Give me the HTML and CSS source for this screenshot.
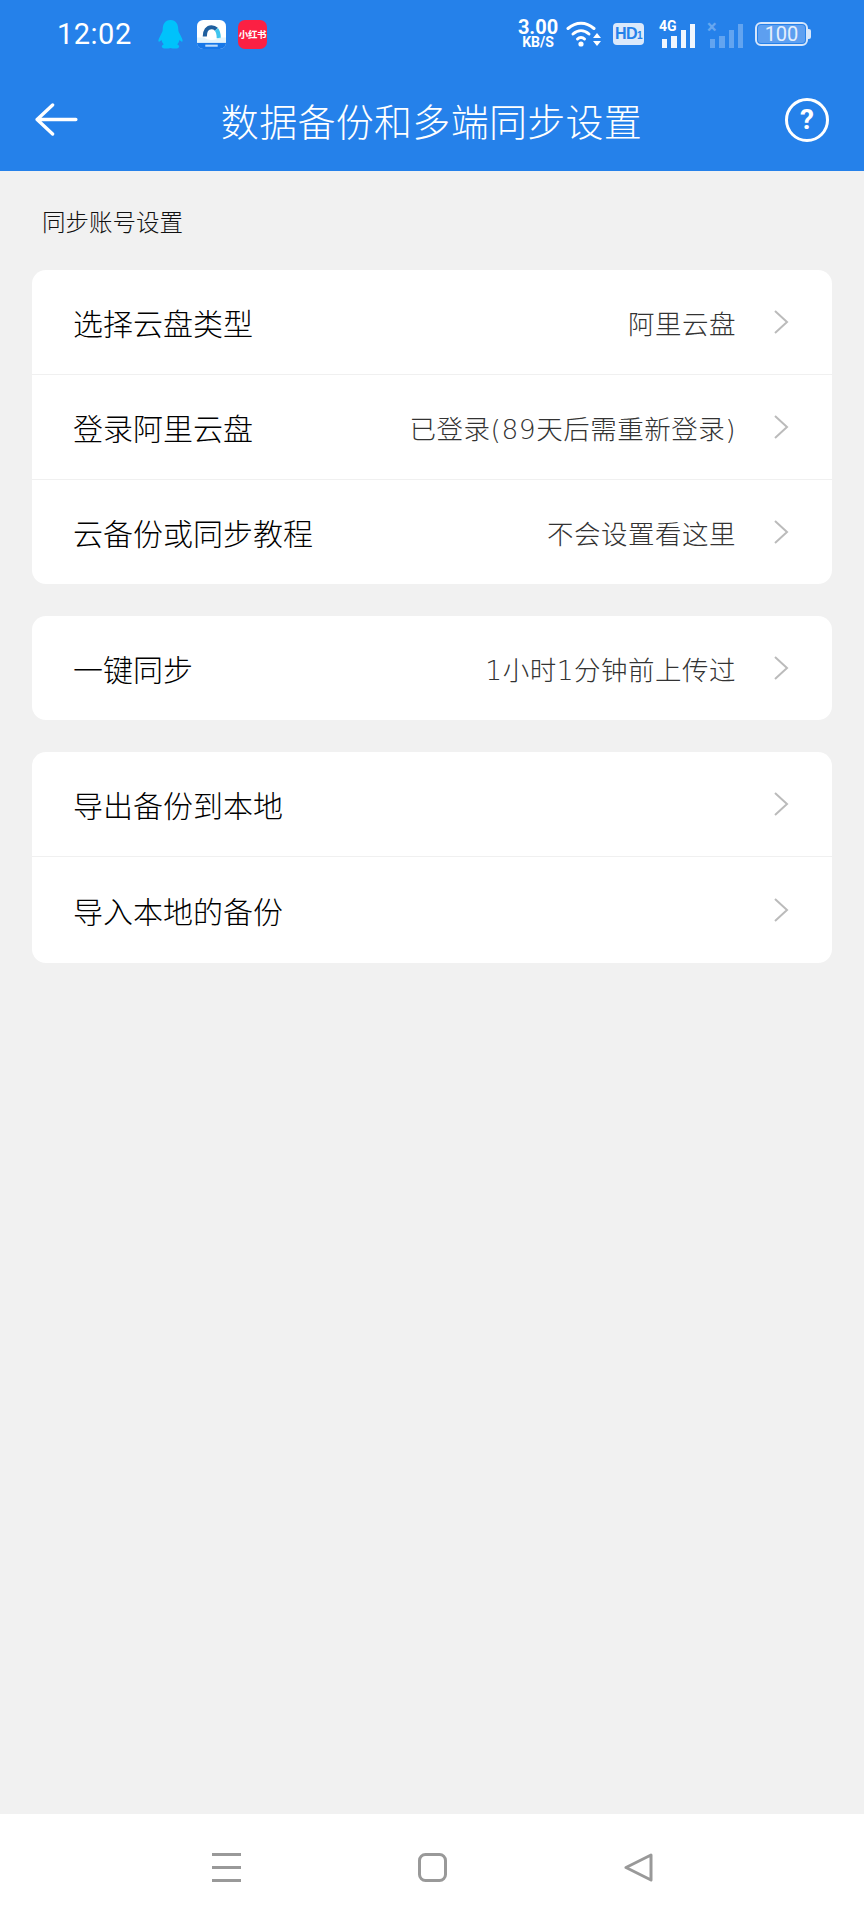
FILE: index.html
```html
<!DOCTYPE html>
<html lang="zh-CN">

<head>
    <meta charset="utf-8" />
    <title>数据备份和多端同步设置</title>
    <link rel="stylesheet" href="styles.css">
</head>

<body>
    <div class="page">
        <div class="top">
            <div class="status">
                <span class="clock">12:02</span>
                <div class="apps">
                    <svg class="app" viewBox="0 0 28 28">
                        <path fill="#00c2fb" d="M14 0C8.500 0 6.500 4.500 6.500 9C6.500 11 5.800 12 4.500 14.500C3 17.500 1.800 20 2.500 20.800C3.200 21.300 4.600 20 5.200 19C5.800 21 6.500 22.500 7.500 23.500C6 24.200 5 25.500 6 26.500C7.500 28 11.500 27.800 14 27C16.500 27.800 20.500 28 22 26.500C23 25.500 22 24.200 20.500 23.500C21.500 22.500 22.200 21 22.800 19C23.400 20 24.800 21.300 25.500 20.800C26.200 20 25 17.500 23.500 14.500C22.200 12 21.500 11 21.500 9C21.500 4.500 19.500 0 14 0Z" />
                    </svg>
                    <svg class="app" viewBox="0 0 28 28">
                        <rect width="28" height="28" rx="6" fill="#fff" />
                        <path fill="#1677e8" d="M0 22H28C28 25.500 25.500 28 22 28H6C2.500 28 0 25.500 0 22Z" />
                        <path fill="none" stroke="#1f5f9f" stroke-width="4" d="M7.500 16C7.500 10.500 10 7 14 7C16 7 17.500 7.800 18.700 9" />
                        <path fill="none" stroke="#3fc4ee" stroke-width="4" d="M18.700 9C20.200 10.800 21 13 21 17.500" />
                        <path fill="#d8effb" d="M0 17H7C9 20 19 20 22 17H28V22H0Z" opacity="0.7" />
                        <rect x="8" y="23.800" width="12" height="2" fill="#bcdcfb" />
                    </svg>
                    <div class="app red-app">小红书</div>
                </div>
                <div class="indicators">
                    <div class="speed"><b>3.00</b><b class="unit">KB/S</b></div>
                    <svg class="wifi" viewBox="0 0 36 28">
                        <g fill="none" stroke="#fff" stroke-width="3" stroke-linecap="round">
                            <path d="M2 8.500C10 1.500 20 1.500 28 8.500" />
                            <path d="M7 14C12 9.500 18 9.500 23 14" />
                            <path d="M11.500 19C13.500 17 16.500 17 18.500 19" />
                        </g>
                        <circle cx="15" cy="24" r="2.600" fill="#fff" />
                        <path fill="#fff" d="M31 13L35 18H27ZM27 21H35L31 26Z" />
                    </svg>
                    <div class="hd">HD<small>1</small></div>
                    <div class="signal">
                        <span class="net">4G</span>
                        <div class="bars">
                            <i class="b1"></i><i class="b2"></i><i class="b3"></i><i class="b4"></i>
                        </div>
                    </div>
                    <div class="signal dim">
                        <span class="net cross">×</span>
                        <div class="bars">
                            <i class="b1"></i><i class="b2"></i><i class="b3"></i><i class="b4"></i>
                        </div>
                    </div>
                    <div class="battery">
                        <div class="cell">100</div>
                        <div class="cap"></div>
                    </div>
                </div>
            </div>
            <div class="bar">
                <svg class="back" viewBox="0 0 44 34">
                    <path fill="none" stroke="#fff" stroke-width="3.400" stroke-linecap="round" stroke-linejoin="round" d="M18 2L2 17L18 32M2 17H42" />
                </svg>
                <h1>数据备份和多端同步设置</h1>
                <div class="help">?</div>
            </div>
        </div>

        <div class="main">
            <p class="section">同步账号设置</p>
            <div class="card">
                <div class="row">
                    <span class="name">选择云盘类型</span>
                    <span class="value">阿里云盘</span>
                    <svg class="arrow" viewBox="0 0 16 26"><path d="M2 2L14 13L2 24" /></svg>
                </div>
                <div class="row">
                    <span class="name">登录阿里云盘</span>
                    <span class="value">已登录(89天后需重新登录)</span>
                    <svg class="arrow" viewBox="0 0 16 26"><path d="M2 2L14 13L2 24" /></svg>
                </div>
                <div class="row">
                    <span class="name">云备份或同步教程</span>
                    <span class="value">不会设置看这里</span>
                    <svg class="arrow" viewBox="0 0 16 26"><path d="M2 2L14 13L2 24" /></svg>
                </div>
            </div>
            <div class="card">
                <div class="row">
                    <span class="name">一键同步</span>
                    <span class="value">1小时1分钟前上传过</span>
                    <svg class="arrow" viewBox="0 0 16 26"><path d="M2 2L14 13L2 24" /></svg>
                </div>
            </div>
            <div class="card">
                <div class="row">
                    <span class="name">导出备份到本地</span>
                    <svg class="arrow" viewBox="0 0 16 26"><path d="M2 2L14 13L2 24" /></svg>
                </div>
                <div class="row">
                    <span class="name">导入本地的备份</span>
                    <svg class="arrow" viewBox="0 0 16 26"><path d="M2 2L14 13L2 24" /></svg>
                </div>
            </div>
        </div>

        <div class="nav">
            <svg class="nav-icon" viewBox="0 0 29 29">
                <path d="M0 1.500H29M0 14.500H29M0 27.500H29" />
            </svg>
            <svg class="nav-icon" viewBox="0 0 29 29">
                <rect x="1.500" y="1.500" width="26" height="26" rx="6" />
            </svg>
            <svg class="nav-icon" viewBox="0 0 29 29">
                <path stroke-linejoin="round" d="M27 2L2 14.500L27 27Z" />
            </svg>
        </div>
    </div>
</body>

</html>
```

FILE: styles.css
```css
* {
    margin: 0;
    padding: 0;
    box-sizing: border-box;
}

body {
    background: #f1f1f1;
    font-family: "Noto Sans CJK SC", "Noto Sans", sans-serif;
}

.page {
    width: 864px;
    height: 1920px;
    display: flex;
    flex-direction: column;
}

/* blue header */
.top {
    height: 171px;
    background: #2581ea;
    color: #fff;
}

.status {
    height: 68px;
    padding: 0 0 0 57px;
    display: flex;
    align-items: center;
}

.clock {
    width: 99px;
    font-family: Roboto, sans-serif;
    font-size: 29px;
    letter-spacing: 0.5px;
}

.apps {
    display: flex;
    gap: 12px;
}

.app {
    width: 29px;
    height: 29px;
}

.red-app {
    background: #fb2043;
    border-radius: 7px;
    font-size: 9.500px;
    font-weight: 700;
    letter-spacing: -0.3px;
    line-height: 29px;
    text-align: center;
    white-space: nowrap;
    overflow: hidden;
}

.indicators {
    margin-left: auto;
    margin-right: 53px;
    display: flex;
    align-items: center;
}

.speed {
    width: 42px;
    display: flex;
    flex-direction: column;
    align-items: center;
    font-family: Roboto, sans-serif;
    font-size: 20px;
    line-height: 17px;
    margin-top: -1px;
}

.speed .unit {
    font-size: 14px;
    line-height: 13px;
}

.wifi {
    width: 36px;
    height: 28px;
    margin-left: 7px;
}

.hd {
    width: 31px;
    height: 22px;
    margin-left: 11px;
    border-radius: 4px;
    background: #dbe9fb;
    color: #2581ea;
    font-family: "Liberation Sans", sans-serif;
    font-size: 16px;
    font-weight: 700;
    line-height: 22px;
    text-align: center;
    letter-spacing: -0.5px;
}

.hd small {
    font-size: 10px;
}

.signal {
    position: relative;
    width: 36px;
    height: 27px;
    margin-left: 15px;
}

.signal.dim {
    margin-left: 12px;
    opacity: 0.3;
}

.net {
    position: absolute;
    left: 0;
    top: -3px;
    font-family: Roboto, sans-serif;
    font-size: 14px;
    font-weight: 700;
}

.net.cross {
    font-size: 18px;
    top: -5px;
}

.bars {
    height: 100%;
    padding-left: 3px;
    display: flex;
    align-items: flex-end;
    gap: 4px;
}

.bars i {
    width: 5.500px;
    background: #f0f6fe;
    display: block;
}

.bars .b1 { height: 9px; }
.bars .b2 { height: 12px; }
.bars .b3 { height: 18px; }
.bars .b4 { height: 24px; }

.battery {
    display: flex;
    align-items: center;
    margin-left: 12px;
}

.cell {
    width: 53px;
    height: 24px;
    border: 2px solid #d6e6fb;
    border-radius: 6px;
    background: #5d9ff0;
    background-clip: content-box;
    padding: 1px;
    font-family: Roboto, sans-serif;
    font-size: 20px;
    line-height: 18px;
    text-align: center;
    color: #e4effc;
}

.cap {
    width: 3px;
    height: 10px;
    background: #d6e6fb;
    border-radius: 0 2px 2px 0;
}

.bar {
    height: 103px;
    padding: 0 35px;
    display: flex;
    align-items: center;
    justify-content: space-between;
}

.back {
    width: 43px;
    height: 33px;
}

.bar h1 {
    font-size: 38px;
    font-weight: 300;
    letter-spacing: 0.3px;
    line-height: 1;
    margin-left: 0;
}

.help {
    width: 44px;
    height: 44px;
    border: 3px solid #fff;
    border-radius: 50%;
    font-family: Roboto, sans-serif;
    font-size: 28px;
    font-weight: 700;
    line-height: 38px;
    text-align: center;
}

/* settings list */
.main {
    flex: 1;
    padding: 0 32px;
}

.section {
    padding: 34px 0 0 10px;
    height: 99px;
    font-size: 23.500px;
    font-weight: 300;
    line-height: 32px;
    color: #111;
}

.card {
    background: #fff;
    border-radius: 14px;
    margin-bottom: 32px;
    overflow: hidden;
}

.row {
    height: 105px;
    padding: 0 43px 0 41px;
    display: flex;
    align-items: center;
    border-bottom: 1px solid #f0f0f0;
}

.row:last-child {
    height: 104px;
    border-bottom: 0;
}

.card:last-child .row:last-child {
    height: 106px;
}

.name {
    font-size: 30px;
    font-weight: 300;
    color: #000;
}

.value {
    margin-left: auto;
    font-family: "DejaVu Sans ExtraLight", "DejaVu Sans", "Noto Sans CJK SC", sans-serif;
    font-size: 26.500px;
    font-weight: 300;
    letter-spacing: 0.5px;
    color: #333;
}

.arrow {
    width: 16px;
    height: 26px;
    margin-left: 37px;
    flex-shrink: 0;
}

.name + .arrow {
    margin-left: auto;
}

.arrow path {
    fill: none;
    stroke: #bbb;
    stroke-width: 2;
}

/* system navigation */
.nav {
    height: 106px;
    background: #fff;
    padding: 39px 0 0 212px;
    display: flex;
    align-items: flex-start;
    gap: 177px;
}

.nav-icon {
    width: 29px;
    height: 29px;
    flex-shrink: 0;
}

.nav-icon path,
.nav-icon rect {
    fill: none;
    stroke: #999;
    stroke-width: 3;
}
```
